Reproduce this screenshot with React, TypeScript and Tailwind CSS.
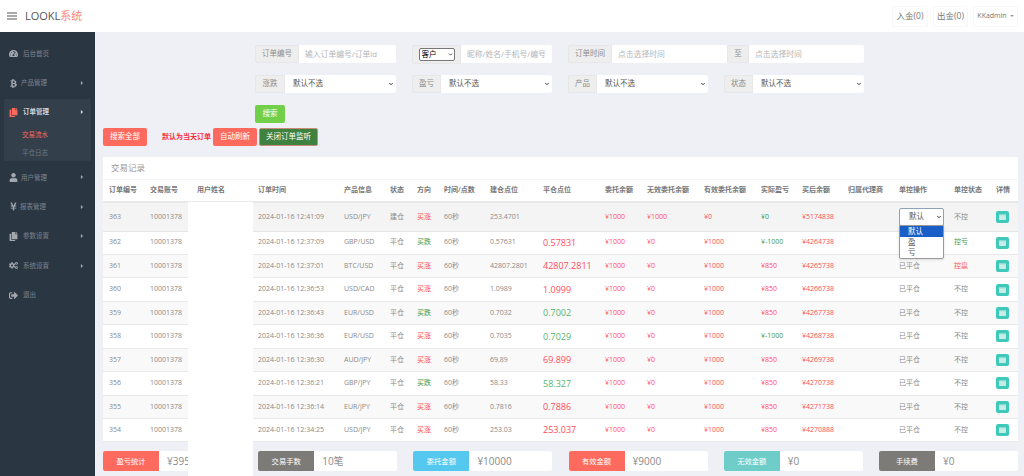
import {
  FaBtc,
  FaCaretRight,
  FaCogs,
  FaCopy,
  FaSignOutAlt,
  FaTachometerAlt,
  FaUser,
  FaYenSign,
} from "react-icons/fa"
import { ChevronDown } from "lucide-react"
import type { IconType } from "react-icons"

const FONT = "font-['Open_Sans','Noto_Sans_CJK_SC',sans-serif]"

type NavItem = { label: string; icon: IconType; caret?: boolean; gap: string }

const navTop: NavItem[] = [
  { label: "后台首页", icon: FaTachometerAlt, gap: "ml-[5px]" },
  { label: "产品管理", icon: FaBtc, caret: true, gap: "ml-[3px]" },
]

const navBottom: NavItem[] = [
  { label: "用户管理", icon: FaUser, caret: true, gap: "ml-[3px]" },
  { label: "报表管理", icon: FaYenSign, caret: true, gap: "ml-[2px]" },
  { label: "参数设置", icon: FaCopy, caret: true, gap: "ml-[5px]" },
  { label: "系统设置", icon: FaCogs, caret: true, gap: "ml-[5px]" },
  { label: "退出", icon: FaSignOutAlt, gap: "ml-[5px]" },
]

type Row = {
  id: number
  time: string
  pair: string
  dir: "up" | "down"
  open: string
  close: string
  win: boolean
  profit: string
  after: string
  action: string
  ctrl: string
}

const rows: Row[] = [
  { id: 362, time: "12:37:09", pair: "GBP/USD", dir: "down", open: "0.57631", close: "0.57831", win: false, profit: "¥-1000", after: "¥4264738", action: "", ctrl: "控亏" },
  { id: 361, time: "12:37:01", pair: "BTC/USD", dir: "up", open: "42807.2801", close: "42807.2811", win: false, profit: "¥850", after: "¥4265738", action: "已平仓", ctrl: "控赢" },
  { id: 360, time: "12:36:53", pair: "USD/CAD", dir: "up", open: "1.0989", close: "1.0999", win: false, profit: "¥850", after: "¥4266738", action: "已平仓", ctrl: "不控" },
  { id: 359, time: "12:36:43", pair: "EUR/USD", dir: "down", open: "0.7032", close: "0.7002", win: true, profit: "¥850", after: "¥4267738", action: "已平仓", ctrl: "不控" },
  { id: 358, time: "12:36:36", pair: "EUR/USD", dir: "up", open: "0.7035", close: "0.7029", win: true, profit: "¥-1000", after: "¥4268738", action: "已平仓", ctrl: "不控" },
  { id: 357, time: "12:36:30", pair: "AUD/JPY", dir: "up", open: "69.89", close: "69.899", win: false, profit: "¥850", after: "¥4269738", action: "已平仓", ctrl: "不控" },
  { id: 356, time: "12:36:21", pair: "GBP/JPY", dir: "down", open: "58.33", close: "58.327", win: true, profit: "¥850", after: "¥4270738", action: "已平仓", ctrl: "不控" },
  { id: 355, time: "12:36:14", pair: "EUR/JPY", dir: "up", open: "0.7816", close: "0.7886", win: false, profit: "¥850", after: "¥4271738", action: "已平仓", ctrl: "不控" },
  { id: 354, time: "12:34:25", pair: "USD/JPY", dir: "up", open: "253.03", close: "253.037", win: false, profit: "¥850", after: "¥4270888", action: "已平仓", ctrl: "不控" },
]

const headers = ["订单编号", "交易账号", "用户姓名", "订单时间", "产品信息", "状态", "方向", "时间/点数", "建仓点位", "平仓点位", "委托余额", "无效委托余额", "有效委托余额", "实际盈亏", "买后余额", "归属代理商", "单控操作", "单控状态", "详情"]
const widths = ["w-[41px]", "w-[47px]", "w-[61px]", "w-[86px]", "w-[46px]", "w-[27px]", "w-[27px]", "w-[46px]", "w-[53px]", "w-[62px]", "w-[42px]", "w-[57px]", "w-[57px]", "w-[41px]", "w-[46px]", "w-[51px]", "w-[55px]", "w-[42px]", "w-[28px]"]

const stats = [
  { label: "盈亏统计", value: "¥39500", color: "bg-[#ff6a5e]" },
  { label: "交易手数", value: "10笔", color: "bg-[#7d7b78]" },
  { label: "委托金额", value: "¥10000", color: "bg-[#55c8f0]" },
  { label: "有效金额", value: "¥9000", color: "bg-[#ff6a5e]" },
  { label: "无效金额", value: "¥0", color: "bg-[#6fcdc9]" },
  { label: "手续费", value: "¥0", color: "bg-[#7d7b78]" },
]

function NavRow({ item }: { item: NavItem }) {
  const Icon = item.icon
  return (
    <div className="flex h-[29.4px] items-center pl-[9px] pr-[11px] text-[#7c858f]">
      <Icon className="h-[9px] w-[9px] shrink-0 text-[#a2a8ae]" />
      <span className={`${item.gap} text-[6.5px]`}>{item.label}</span>
      {item.caret && <FaCaretRight className="ml-auto h-[6px] w-[4px] text-[#a2a8ae]" />}
    </div>
  )
}

function Sidebar() {
  return (
    <aside className="flex w-[95px] shrink-0 flex-col bg-[#2b3643] pt-[7px]">
      {navTop.map((item) => (
        <NavRow key={item.label} item={item} />
      ))}
      <div className="mx-[4px] mt-[1px] h-[62px] rounded-[2px] bg-[#343f4c]">
        <div className="flex h-[27px] items-center pl-[5px] pr-[7px] text-[#d5d8db]">
          <FaCopy className="h-[9px] w-[9px] shrink-0 text-[#ff6a5e]" />
          <span className="ml-[5px] text-[6.5px] font-semibold">订单管理</span>
          <FaCaretRight className="ml-auto h-[6px] w-[4px] text-[#d5d8db]" />
        </div>
        <div className="flex h-[18px] items-center pl-[18px] text-[6.5px] text-[#ff6a5e]">交易流水</div>
        <div className="flex h-[19px] items-center pl-[18px] text-[6.5px] text-[#6f7883]">平仓日志</div>
      </div>
      <div className="mt-[2px]">
        {navBottom.map((item) => (
          <NavRow key={item.label} item={item} />
        ))}
      </div>
    </aside>
  )
}

function Addon({ children, width }: { children: React.ReactNode; width: string }) {
  return (
    <span className={`flex h-[18px] ${width} shrink-0 items-center justify-center rounded-l-[2px] border border-[#e7e7e7] bg-[#eeeeee] text-[7.5px] text-[#8c8c8c]`}>
      {children}
    </span>
  )
}

function FilterInput({ placeholder, width }: { placeholder: string; width: string }) {
  return (
    <input
      placeholder={placeholder}
      className={`h-[18px] ${width} rounded-r-[2px] bg-white pl-[6px] text-[7.8px] outline-none placeholder:text-[#b5b5b5]`}
    />
  )
}

function FilterSelect({ label, labelWidth, width }: { label: string; labelWidth: string; width: string }) {
  return (
    <div className="flex">
      <Addon width={labelWidth}>{label}</Addon>
      <div className="relative">
        <select className={`block h-[18px] ${width} appearance-none rounded-r-[2px] bg-white pl-[8px] text-[7.5px] text-[#555] outline-none`}>
          <option>默认不选</option>
        </select>
        <ChevronDown strokeWidth={4} className="pointer-events-none absolute right-[2px] top-[6px] h-[6px] w-[6px] text-[#444]" />
      </div>
    </div>
  )
}

function Filters() {
  return (
    <div className="ml-[152px] flex flex-col">
      <div className="flex h-[18px]">
        <div className="flex w-[157px]">
          <Addon width="w-[44px]">订单编号</Addon>
          <FilterInput width="w-[97px]" placeholder="输入订单编号/订单id" />
        </div>
        <div className="flex w-[156px]">
          <span className="flex h-[19px] w-[49px] shrink-0 items-center justify-center rounded-l-[2px] border border-[#e7e7e7] bg-[#eeeeee]">
            <span className="relative">
              <select className="block h-[13px] w-[36px] appearance-none rounded-[2px] border border-[#777] bg-white pl-[2px] text-[7.5px] text-black outline-none">
                <option>客户</option>
              </select>
              <ChevronDown strokeWidth={4} className="pointer-events-none absolute right-[2px] top-[4px] h-[5px] w-[5px] text-[#333]" />
            </span>
          </span>
          <FilterInput width="w-[91px]" placeholder="昵称/姓名/手机号/编号" />
        </div>
        <div className="flex">
          <Addon width="w-[44px]">订单时间</Addon>
          <FilterInput width="w-[115px]" placeholder="点击选择时间" />
          <Addon width="w-[22px]">至</Addon>
          <FilterInput width="w-[115px]" placeholder="点击选择时间" />
        </div>
      </div>
      <div className="mt-[12px] flex gap-[16px]">
        <FilterSelect label="涨跌" labelWidth="w-[30px]" width="w-[111px]" />
        <FilterSelect label="盈亏" labelWidth="w-[29px]" width="w-[111px]" />
        <FilterSelect label="产品" labelWidth="w-[29px]" width="w-[111px]" />
        <FilterSelect label="状态" labelWidth="w-[29px]" width="w-[111px]" />
      </div>
      <button className="mt-[12px] h-[18px] w-[30px] rounded-[2px] bg-[#72cf4a] text-[7.5px] text-white">搜索</button>
    </div>
  )
}

function DetailButton() {
  return (
    <span className="flex h-[12px] w-[13px] items-center justify-center rounded-[2px] bg-[#3fc9bb]">
      <svg viewBox="0 0 8 7" className="h-[6px] w-[7px]">
        <rect width="8" height="7" rx="0.5" fill="#c9ece8" />
        <rect width="8" height="1.5" fill="#8fd9d1" />
      </svg>
    </span>
  )
}

const cell = "pl-[6px] text-[7px] whitespace-nowrap"
const red = "text-[#ff4d5a]"
const green = "text-[#3c9a4e]"

function TradeTable() {
  return (
    <table className="w-full table-fixed border-collapse text-[#8a8a8a]">
      <colgroup>
        {widths.map((w, i) => (
          <col key={i} className={w} />
        ))}
      </colgroup>
      <thead>
        <tr className="h-[22px] border-b-2 border-[#e9e9e9]">
          {headers.map((h) => (
            <th key={h} className={`${cell} text-left font-semibold text-[#777]`}>
              {h}
            </th>
          ))}
        </tr>
      </thead>
      <tbody>
        <tr className="h-[29px] border-b border-[#e6e6e6] bg-[#f4f4f4]">
          <td className={cell}>363</td>
          <td className={cell}>10001378</td>
          <td className={cell}></td>
          <td className={cell}>2024-01-16 12:41:09</td>
          <td className={cell}>USD/JPY</td>
          <td className={cell}>建仓</td>
          <td className={`${cell} ${red}`}>买涨</td>
          <td className={cell}>60秒</td>
          <td className={cell}>253.4701</td>
          <td className={cell}></td>
          <td className={`${cell} ${red}`}>¥1000</td>
          <td className={`${cell} ${red}`}>¥1000</td>
          <td className={`${cell} ${red}`}>¥0</td>
          <td className={`${cell} ${green}`}>¥0</td>
          <td className={`${cell} ${red}`}>¥5174838</td>
          <td className={cell}></td>
          <td className={cell}>
            <div className="relative w-[45px]">
              <select className="block h-[18px] w-[45px] appearance-none rounded-[2px] border border-[#8fa3b8] bg-white pl-[9px] text-[7.5px] text-[#555] outline-none">
                <option>默认</option>
              </select>
              <ChevronDown strokeWidth={4} className="pointer-events-none absolute right-[2px] top-[6px] h-[6px] w-[6px] text-[#333]" />
            </div>
          </td>
          <td className={cell}>不控</td>
          <td className={cell}>
            <DetailButton />
          </td>
        </tr>
        {rows.map((r, i) => (
          <tr key={r.id} className={`h-[23.45px] border-b border-[#e9e9e9] ${i % 2 === 1 ? "bg-[#f9f9f9]" : "bg-white"}`}>
            <td className={cell}>{r.id}</td>
            <td className={cell}>10001378</td>
            <td className={cell}></td>
            <td className={cell}>2024-01-16 {r.time}</td>
            <td className={cell}>{r.pair}</td>
            <td className={cell}>平仓</td>
            <td className={`${cell} ${r.dir === "up" ? red : green}`}>{r.dir === "up" ? "买涨" : "买跌"}</td>
            <td className={cell}>60秒</td>
            <td className={cell}>{r.open}</td>
            <td className={`pl-[6px] text-[9px] whitespace-nowrap ${r.win ? "text-[#55b56e]" : red}`}>{r.close}</td>
            <td className={`${cell} ${red}`}>¥1000</td>
            <td className={`${cell} ${red}`}>¥0</td>
            <td className={`${cell} ${red}`}>¥1000</td>
            <td className={`${cell} ${r.profit === "¥-1000" ? green : red}`}>{r.profit}</td>
            <td className={`${cell} ${red}`}>{r.after}</td>
            <td className={cell}></td>
            <td className={cell}>{r.action}</td>
            <td className={`${cell} ${r.ctrl === "控亏" ? green : r.ctrl === "控赢" ? red : ""}`}>{r.ctrl}</td>
            <td className={cell}>
              <DetailButton />
            </td>
          </tr>
        ))}
      </tbody>
    </table>
  )
}

export default function App() {
  return (
    <div className={`relative flex h-screen flex-col overflow-hidden bg-[#eef0f5] ${FONT}`}>
      <header className="flex h-[32px] shrink-0 items-center bg-white">
        <svg viewBox="0 0 10 8" className="ml-[7px] h-[8px] w-[10px]">
          <path d="M0 1h10M0 4h10M0 7h10" stroke="#555" strokeWidth="1.2" />
        </svg>
        <div className="ml-[8px] text-[11px] text-[#555]">
          LOOKL<span className="text-[#ff8a80]">系统</span>
        </div>
        <div className="ml-auto mr-[6px] flex gap-[5px] text-[#777]">
          <span className="flex h-[21px] w-[36px] items-center justify-center rounded-[2px] border border-[#f8f8f8] text-[8.5px]">入金(0)</span>
          <span className="flex h-[21px] w-[35px] items-center justify-center rounded-[2px] border border-[#f8f8f8] text-[8.5px]">出金(0)</span>
          <span className="flex h-[21px] w-[45px] items-center justify-center gap-[3px] rounded-[2px] border border-[#f8f8f8] text-[7px]">
            KKadmin
            <span className="h-0 w-0 border-x-[2px] border-t-[2px] border-x-transparent border-t-[#999]" />
          </span>
        </div>
      </header>
      <div className="flex min-h-0 flex-1">
        <Sidebar />
        <main className="min-w-0 flex-1 pl-[8px] pr-[6px] pt-[13px]">
          <Filters />
          <div className="mt-[5px] flex h-[18px] items-center">
            <button className="h-[18px] w-[44px] rounded-[2px] bg-[#ff6a5e] text-[7.5px] text-white">搜索全部</button>
            <span className="ml-[15px] text-[7px] font-bold text-[#ff2b3a]">默认为当天订单</span>
            <button className="ml-[2px] h-[18px] w-[44px] rounded-[2px] bg-[#ff6a5e] text-[7.5px] text-white">自动刷新</button>
            <button className="ml-[2px] h-[18px] w-[59px] rounded-[2px] border border-[#c98a78] bg-[#3f813f] text-[7.5px] text-white">关闭订单监听</button>
          </div>
          <section className="mt-[11px] bg-white">
            <div className="flex h-[23px] items-center border-b border-[#f5f5f5] pl-[8px] text-[8.5px] text-[#999]">交易记录</div>
            <TradeTable />
          </section>
          <div className="mt-[9px] flex justify-between">
            {stats.map((s) => (
              <div key={s.label} className="flex h-[20px] w-[139px] overflow-hidden rounded-[2px] bg-white">
                <span className={`flex w-[56px] shrink-0 items-center justify-center text-[7.3px] text-white ${s.color}`}>{s.label}</span>
                <span className="flex items-center pl-[8px] text-[10px] text-[#8a8a8a]">{s.value}</span>
              </div>
            ))}
          </div>
        </main>
      </div>

      {/* white patch covering the user name column */}
      <div className="absolute left-[188px] top-[202px] bottom-0 w-[65px] bg-white" />

      {/* open dropdown of the first row */}
      <div className="absolute left-[899px] top-[225px] w-[45px] rounded-b-[2px] border border-[#9a9a9a] bg-white text-[7.5px] text-[#555] shadow-sm">
        <div className="flex h-[11px] items-center bg-[#1a5fc8] pl-[8px] text-white">默认</div>
        <div className="flex h-[11px] items-center pl-[8px]">盈</div>
        <div className="flex h-[10px] items-center pl-[8px]">亏</div>
      </div>
    </div>
  )
}
